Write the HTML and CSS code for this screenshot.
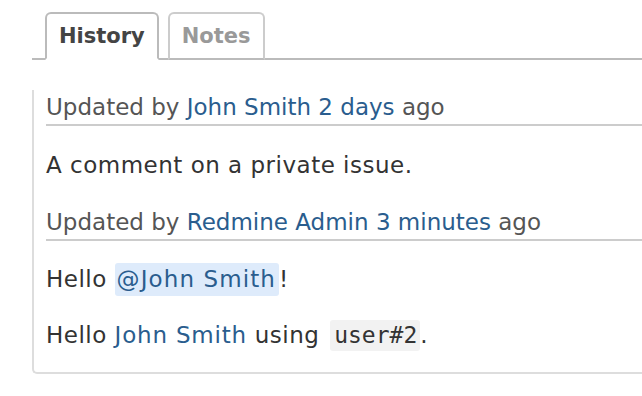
FILE: index.html
```html
<!DOCTYPE html>
<html>
<head>
<meta charset="utf-8">
<link rel="stylesheet" href="styles.css">
</head>
<body>
<div class="page">
  <div class="tabs">
    <ul class="tab-list">
      <li class="tab tab-active">History</li>
      <li class="tab">Notes</li>
    </ul>
  </div>
  <div class="history">
    <h4 class="journal-head">Updated by <a href="#">John Smith</a> <a href="#">2 days</a> ago</h4>
    <p class="note">A comment on a private issue.</p>
    <h4 class="journal-head">Updated by <a href="#">Redmine Admin</a> <a href="#">3 minutes</a> ago</h4>
    <p class="note note-first">Hello <a href="#" class="mention">@John Smith</a>!</p>
    <p class="note note-last">Hello <a href="#" class="user-link">John Smith</a> using <code class="code">user#2</code>.</p>
  </div>
</div>
</body>
</html>
```
FILE: styles.css
```css
html, body {
  margin: 0;
  padding: 0;
  background: #fff;
}
body {
  font-family: "DejaVu Sans", Verdana, sans-serif;
  font-size: 22px;
  color: #333;
}
.page {
  padding: 12px 0 0 32px;
  overflow: hidden;
  width: 610px;
}
.tabs {
  border-bottom: 2px solid #bbb;
}
.tab-list {
  display: flex;
  gap: 9px;
  list-style: none;
  margin: 0 0 -2px 13px;
  padding: 0;
}
.tab {
  height: 44px;
  line-height: 44px;
  padding: 0 12px;
  border: 2px solid #ccc;
  border-bottom: 2px solid #bbb;
  border-radius: 6px 6px 0 0;
  font-weight: bold;
  font-size: 21px;
  color: #999;
  background: #fff;
}
.tab-active {
  color: #444;
  border-color: #bbb;
  border-bottom-color: #fff;
}
.history {
  margin-top: 30px;
  border-left: 2px solid #ddd;
  border-bottom: 2px solid #ddd;
  border-bottom-left-radius: 5px;
  padding: 0 0 0 12px;
}
.journal-head {
  margin: 0;
  padding-top: 1px;
  font-weight: normal;
  font-size: 23px;
  line-height: 33px;
  color: #555;
  border-bottom: 2px solid #ccc;
}
.note {
  margin: 23px 0;
  font-size: 23px;
  letter-spacing: 0.5px;
  line-height: 33px;
}
.note-first {
  margin-top: 22px;
}
.note-last {
  margin-bottom: 20px;
}
a {
  color: #2a5d8e;
  text-decoration: none;
}
.mention {
  background: #deebfb;
  border-radius: 3px;
  padding: 3px 3px 4px 2px;
  letter-spacing: 1.1px;
}
.user-link {
  letter-spacing: 0.8px;
}
.code {
  font-family: "DejaVu Sans Mono", monospace;
  font-size: 23px;
  letter-spacing: 0;
  background: #f2f2f2;
  border-radius: 3px;
  padding: 2px 3px 3px 4px;
  margin-left: 3px;
}
```
